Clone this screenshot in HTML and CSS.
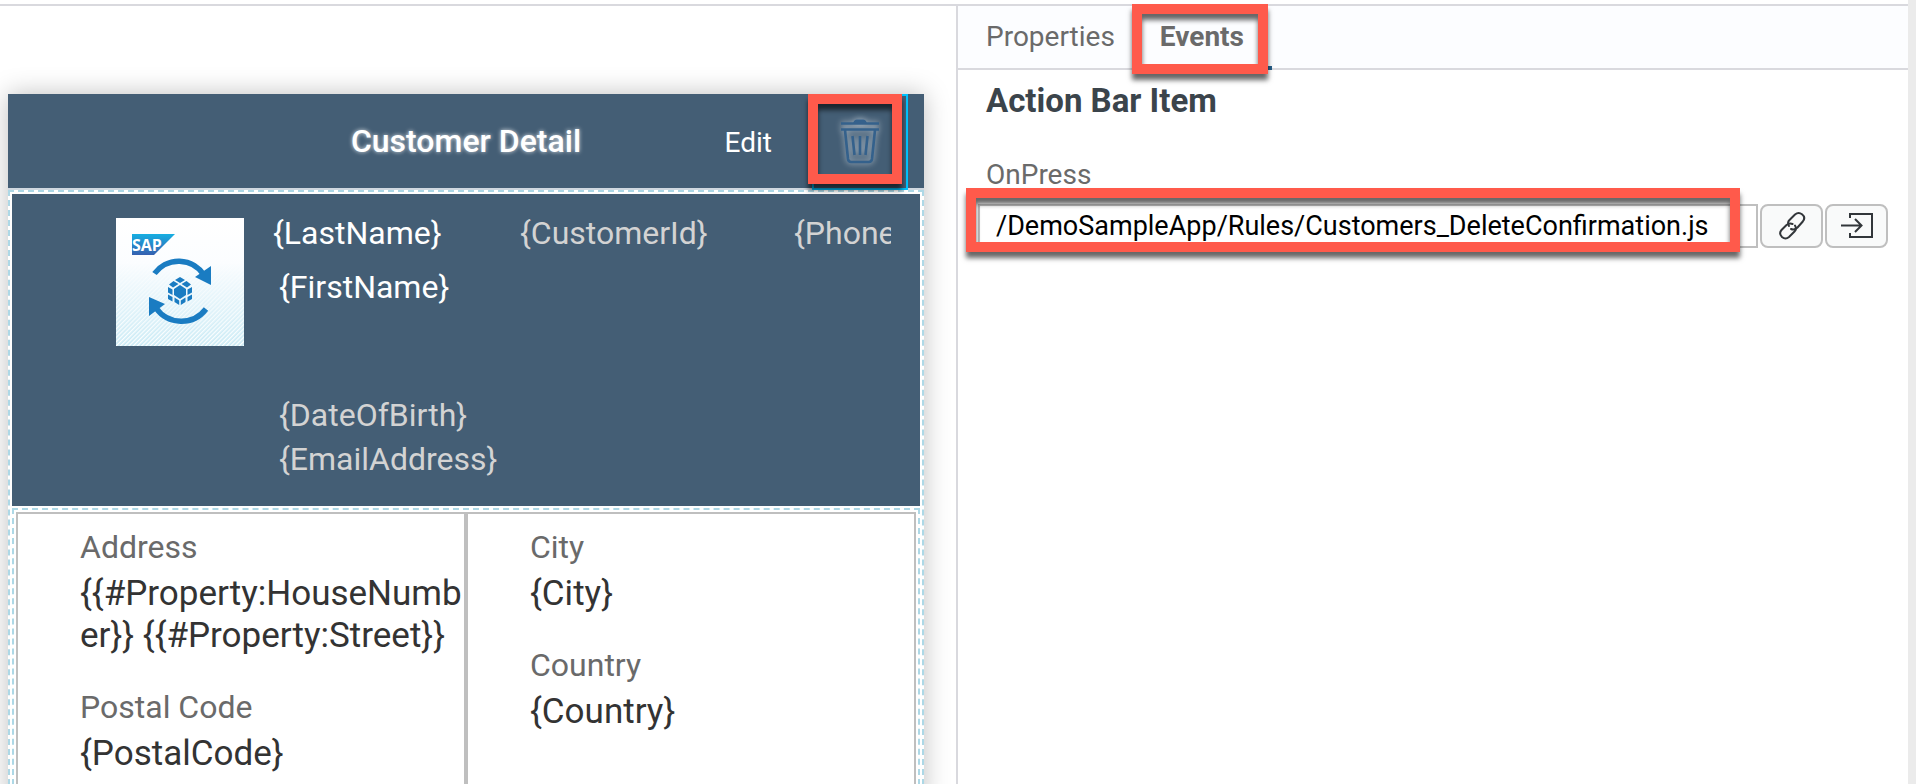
FILE: index.html
```html
<!DOCTYPE html>
<html lang="en">
<head>
<meta charset="utf-8">
<title>Customer Detail</title>
<link rel="stylesheet" href="styles.css">
</head>
<body>
<div class="workspace">
  <main class="canvas">
    <article class="device">
      <header class="action-bar">
        <h1 class="page-title">Customer Detail</h1>
        <div class="actions">
          <button class="edit" type="button">Edit</button>
          <button class="trash" type="button" aria-label="Delete">
            <svg width="46" height="52" viewBox="0 0 46 52" fill="none" stroke="#34618c" stroke-width="2.6">
              <path d="M4 7.500h38M4 13.500h38M8 14l3 29q.4 3 3.400 3h17.200q3 0 3.400-3l3-29M15.500 20l2 19M23 20v19M30.500 20l-2 19"/>
              <path d="M16 7.500q1-4 4-4h6q3 0 4 4z" fill="#34618c" stroke="none"/>
            </svg>
            <span class="highlight highlight-trash"></span>
          </button>
        </div>
      </header>
      <div class="sections">
        <section class="profile">
          <svg class="avatar" width="128" height="128" viewBox="0 0 128 128" role="img" aria-label="SAP">
            <defs>
              <linearGradient id="sky" x1="0" y1="0" x2="0" y2="1"><stop offset="0" stop-color="#fff"/><stop offset=".35" stop-color="#fbfdff"/><stop offset="1" stop-color="#c8eaf5"/></linearGradient>
              <linearGradient id="fade" x1="0" y1="0" x2="0" y2="1"><stop offset=".1" stop-color="#000"/><stop offset="1" stop-color="#fff"/></linearGradient>
              <linearGradient id="brand" x1="0" y1="0" x2="0" y2="1"><stop offset="0" stop-color="#16afe2"/><stop offset="1" stop-color="#3560b0"/></linearGradient>
              <pattern id="hatch" width="3" height="4" patternUnits="userSpaceOnUse" patternTransform="rotate(45)"><rect width="1.300" height="4" fill="#fff"/></pattern>
              <mask id="lower"><rect width="128" height="128" fill="url(#fade)"/></mask>
            </defs>
            <rect width="128" height="128" fill="url(#sky)"/>
            <rect width="128" height="128" fill="url(#hatch)" mask="url(#lower)"/>
            <path d="M16 16h43L38 37H16z" fill="url(#brand)"/>
            <text class="brand-text" x="16" y="33">SAP</text>
            <g fill="none" stroke="#1a7cc2" stroke-width="5.500">
              <path d="M38.500 55.500A30 30 0 0 1 88 57"/>
              <path d="M90 91A31 31 0 0 1 40 90"/>
            </g>
            <path d="M95 48v19L79 59zM33 79v19l16-12z" fill="#1a7cc2"/>
            <g fill="#1a7cc2">
              <path d="M64 59l5 3-5 3-5-3zM57.500 63l5 3-5.500 3.500-4-3zM70.500 63l-5 3 5.500 3.500 4-3zM64 67l6 4v6l-6 4-6-4v-6zM52 69l4.500 2.500v5.500L52 74.500zM76 69l-4.500 2.500v5.500l4.500-2.500zM52 76.500l4.500 2.500v4.500L52 81zM76 76.500L71.500 79v4.500L76 81zM58.500 79.500l4.700 3v4.500l-4.700-3zM69.500 79.500l-4.700 3v4.500l4.700-3z"/>
            </g>
          </svg>
          <div class="names">
            <p class="field strong">{LastName}</p>
            <div class="details">
              <p class="field strong">{FirstName}</p>
              <p class="field footnote">{DateOfBirth}</p>
              <p class="field">{EmailAddress}</p>
            </div>
          </div>
          <p class="field">{CustomerId}</p>
          <p class="field clipped">{Phone}</p>
        </section>
        <section class="key-values">
          <dl class="cell">
            <dt>Address</dt>
            <dd>{{#Property:HouseNumber}} {{#Property:Street}}</dd>
            <dt>Postal Code</dt>
            <dd>{PostalCode}</dd>
          </dl>
          <dl class="cell">
            <dt>City</dt>
            <dd>{City}</dd>
            <dt>Country</dt>
            <dd>{Country}</dd>
          </dl>
        </section>
      </div>
    </article>
  </main>
  <aside class="inspector">
    <nav class="tabs" role="tablist">
      <button class="tab" type="button" role="tab" aria-selected="false">Properties</button>
      <button class="tab selected" type="button" role="tab" aria-selected="true">Events<span class="highlight highlight-tab"></span></button>
    </nav>
    <div class="panel">
      <h2 class="panel-title">Action Bar Item</h2>
      <label class="label" for="on-press">OnPress</label>
      <div class="binding">
        <div class="input-wrap">
          <input class="input" id="on-press" type="text" value="/DemoSampleApp/Rules/Customers_DeleteConfirmation.js">
          <span class="highlight highlight-input"></span>
        </div>
        <button class="icon-button" type="button" aria-label="Link">
          <svg width="32" height="32" viewBox="0 0 32 32" fill="none" stroke="#32363a" stroke-width="2" stroke-linecap="round">
            <path d="M13 16c-1.500-2.500-1-4.500.5-6l5.500-5.500q3.500-3 7-.3q4 3.300.8 7.300l-5.300 6q-3 3-6.500 1.500"/>
            <path d="M19 15.500c1.500 2.500 1 4.500-.5 6l-5.500 5.500q-3.500 3-7 0q-3.500-3.500-.5-7l5-5q3-2.500 6-1"/>
          </svg>
        </button>
        <button class="icon-button" type="button" aria-label="Open target">
          <svg width="34" height="32" viewBox="0 0 34 32" fill="none" stroke="#32363a" stroke-width="2">
            <path d="M10 8V4h22v23H10v-4M1 15.500h20M15 9l6.500 6.500L15 22"/>
          </svg>
        </button>
      </div>
    </div>
  </aside>
</div>
</body>
</html>
```
FILE: styles.css
```css
* { box-sizing: border-box; }

body {
  margin: 0;
  background: #fff;
  font-family: Roboto, "Liberation Sans", sans-serif;
  color: #32363a;
}

h1, h2, p, dl, dd { margin: 0; }

button {
  padding: 0;
  border: 0;
  background: none;
  font: inherit;
  color: inherit;
}

.workspace {
  display: grid;
  grid-template-columns: 958fr 950fr;
  height: 100vh;
  padding-top: 4px;
  border-right: 8px solid #ebebeb;
  overflow: hidden;
}

.canvas,
.inspector { border-top: 2px solid #d9d9de; }

.canvas {
  display: flex;
  min-width: 0;
  border-right: 2px solid #d9d9de;
  padding: 88px 32px 0 8px;
}

.device {
  flex: 1;
  display: flex;
  flex-direction: column;
  min-width: 0;
  background: #fff;
  box-shadow: 0 0 24px rgba(0, 0, 0, .25);
}

.action-bar {
  display: grid;
  grid-template-columns: 1fr auto 1fr;
  align-items: center;
  height: 96px;
  flex: none;
  background: #445e75;
  border-bottom: 2px solid #d0d8e0;
  color: #fff;
}

.page-title {
  grid-column: 2;
  font-size: 32px;
  font-weight: 500;
  line-height: 40px;
  text-shadow: 0 0 4px rgba(255, 255, 255, .8);
}

.actions {
  display: flex;
  justify-content: flex-end;
  align-items: center;
  gap: 40px;
  margin-bottom: -2px;
  padding-right: 16px;
}

.edit { font-size: 28px; }

.trash {
  position: relative;
  width: 96px;
  height: 96px;
  display: grid;
  place-items: center;
  border: 2px solid #00c3ff;
}

.trash svg {
  overflow: visible;
  filter: drop-shadow(0 0 3px rgba(230, 238, 245, .8));
}

.highlight {
  position: absolute;
  z-index: 1;
  border: 10px solid #ff5a4b;
  box-shadow: 0 6px 5px rgba(0, 0, 0, .6), inset 0 6px 5px rgba(0, 0, 0, .6);
  pointer-events: none;
}

.highlight-trash { inset: -2px 4px 4px -6px; }
.highlight-tab { inset: -2px 4px -8px 0; }
.highlight-input { inset: -16px 18px -4px -12px; }

.sections {
  flex: 1;
  display: flex;
  flex-direction: column;
  padding: 2px 2px 0;
  border: 2px dashed #add8e6;
  border-bottom: 0;
}

.profile {
  display: grid;
  grid-template-columns: 128px minmax(0, 247fr) minmax(0, 274fr) minmax(0, 126fr);
  align-items: start;
  padding: 19px 29px 27px 104px;
  background: #445e75;
}

.names { padding-left: 29px; }
.avatar { margin-top: 5px; }

.brand-text {
  font: 700 16px "Open Sans", sans-serif;
  fill: #fff;
}

.field {
  font-size: 32px;
  line-height: 40px;
  color: #d3d3d3;
}

.profile > .field { padding-left: 29px; }
.clipped { overflow: hidden; }
.strong { color: #fff; }
.details { padding: 14px 0 0 6px; }
.footnote { margin: 88px 0 4px; }

.key-values {
  flex: 1;
  display: grid;
  grid-template-columns: minmax(0, 1fr) minmax(0, 1fr);
  margin-top: 2px;
  padding: 2px 2px 0;
  border: 2px dashed #add8e6;
  border-bottom: 0;
}

.cell {
  padding: 13px 0 0 62px;
  border: 2px solid #bfbfbf;
  border-bottom: 0;
}

.cell dt {
  margin-bottom: 6px;
  font-size: 32px;
  line-height: 40px;
  color: #6a6a6a;
}

.cell dd {
  margin-bottom: 30px;
  font-size: 35px;
  line-height: 42px;
  color: #333;
  word-break: break-all;
}

.tabs {
  display: flex;
  height: 64px;
  padding-left: 28px;
  gap: 17px;
  background: #fcfdff;
  border-bottom: 2px solid #d9d9de;
}

.tab {
  position: relative;
  height: 64px;
  padding-bottom: 4px;
  font-size: 28px;
  color: #6a6a6a;
}

.selected {
  padding: 0 28px;
  border-bottom: 4px solid #265f8a;
  font-weight: 700;
}

.panel { padding: 11px 20px 0; }

.panel-title {
  padding-left: 8px;
  font-size: 33px;
  line-height: 40px;
  color: #3b444b;
}

.label {
  display: block;
  margin: 36px 0 11px;
  padding-left: 8px;
  font-size: 28px;
  line-height: 36px;
  color: #6a6a6a;
}

.binding { display: flex; gap: 2px; }
.input-wrap { position: relative; flex: 1; }

.input {
  display: block;
  width: 100%;
  height: 44px;
  padding: 0 16px;
  border: 2px solid #bfbfbf;
  background: #fff;
  font: inherit;
  font-size: 27px;
  color: #000;
}

.icon-button {
  display: grid;
  place-items: center;
  width: 63px;
  height: 44px;
  border: 2px solid #bfbfbf;
  border-radius: 8px;
  background: #f9fafa;
}
```
